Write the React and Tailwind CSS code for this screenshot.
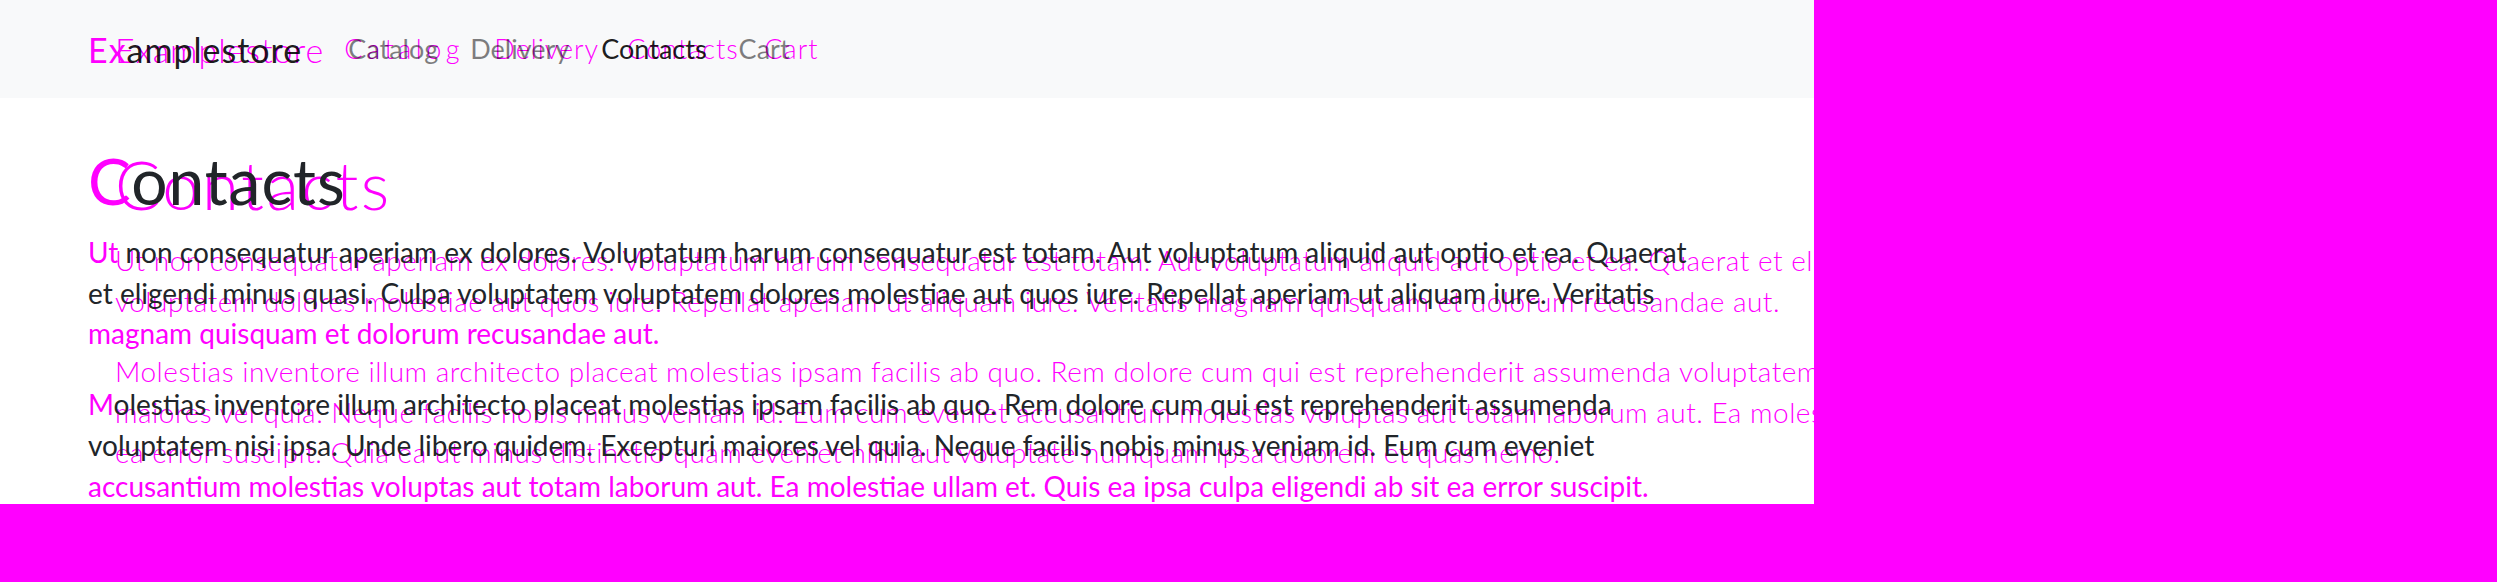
import React from 'react';

const MAG = 'text-[#ff00ff]';

export default function App() {
  return (
    <div className="w-[2497px] h-[582px] bg-[#ff00ff] overflow-hidden" style={{ fontFamily: 'Lato, "Open Sans", sans-serif' }}>
      <div className="relative w-[1814px] h-[504px] bg-white overflow-hidden text-[#212529]">
        {/* navbar */}
        <nav className="h-[98px] bg-[#f8f9fa] flex items-center pl-[88px]">
          <span className="relative z-20 text-[34px] leading-[51px] tracking-[1px] text-black/90">
            <span className={MAG}>Ex</span>amplestore
          </span>
          <div className="flex items-center ml-[46px] gap-[32px] text-[27px] leading-[40px]">
            <span className="relative z-20 text-black/50">Catalog</span>
            <span className="relative z-20 text-black/50">Delivery</span>
            <span className="relative z-20 text-black/90">Contacts</span>
            <span className="relative z-20 text-black/50">Cart</span>
          </div>
        </nav>

        <main className="pl-[88px]">
          <h1 className="relative z-20 text-[64px] leading-[77px] tracking-[1px] mt-[44px] mb-[13px]">
            <span className={MAG}>C</span>ontacts
          </h1>
          <p className="relative z-20 text-[28px] leading-[40.5px] whitespace-nowrap mb-[30px]">
            <span className="block"><span className={MAG}>Ut</span> non consequatur aperiam ex dolores. Voluptatum harum consequatur est totam. Aut voluptatum aliquid aut optio et ea. Quaerat</span>
            <span className="block">et eligendi minus quasi. Culpa voluptatem voluptatem dolores molestiae aut quos iure. Repellat aperiam ut aliquam iure. Veritatis</span>
            <span className={`block ${MAG}`}>magnam quisquam et dolorum recusandae aut.</span>
          </p>
          <p className="relative z-20 text-[28px] leading-[41px] whitespace-nowrap">
            <span className="block"><span className={MAG}>M</span>olestias inventore illum architecto placeat molestias ipsam facilis ab quo. Rem dolore cum qui est reprehenderit assumenda</span>
            <span className="block">voluptatem nisi ipsa. Unde libero quidem. Excepturi maiores vel quia. Neque facilis nobis minus veniam id. Eum cum eveniet</span>
            <span className={`block ${MAG}`}>accusantium molestias voluptas aut totam laborum aut. Ea molestiae ullam et. Quis ea ipsa culpa eligendi ab sit ea error suscipit.</span>
          </p>
        </main>

        {/* ghost layer */}
        <div className={`absolute inset-0 z-10 font-light ${MAG} whitespace-nowrap`}>
          <div className="h-[98px] flex items-center pl-[115px]">
            <span className="text-[34px] leading-[51px] tracking-[1px]">Examplestore</span>
            <div className="flex items-center ml-[20px] gap-[30px] text-[27px] leading-[40px] tracking-[1px]">
              <span className="w-[120px] tracking-[4.5px]">Catalog</span>
              <span className="w-[103px]">Delivery</span>
              <span className="w-[107px]">Contacts</span>
              <span>Cart</span>
            </div>
          </div>
          <div className="pl-[115px]">
            <h1 className="text-[67px] leading-[80px] mt-[46px] mb-[16px] tracking-[2.5px]">Contacts</h1>
            <p className="text-[28px] leading-[41px] tracking-[0.5px] mb-[29px]">
              <span className="block">Ut non consequatur aperiam ex dolores. Voluptatum harum consequatur est totam. Aut voluptatum aliquid aut optio et ea. Quaerat et eligendi minus quasi. Culpa voluptatem</span>
              <span className="block">voluptatem dolores molestiae aut quos iure. Repellat aperiam ut aliquam iure. Veritatis magnam quisquam et dolorum recusandae aut.</span>
            </p>
            <p className="text-[28px] leading-[40.5px] tracking-[0.5px]">
              <span className="block">Molestias inventore illum architecto placeat molestias ipsam facilis ab quo. Rem dolore cum qui est reprehenderit assumenda voluptatem nisi ipsa. Unde libero quidem. Excepturi</span>
              <span className="block">maiores vel quia. Neque facilis nobis minus veniam id. Eum cum eveniet accusantium molestias voluptas aut totam laborum aut. Ea molestiae ullam et. Quis ea ipsa culpa eligendi ab sit</span>
              <span className="block">ea error suscipit. Quia ea ut minus distinctio quam eveniet nihil aut voluptate numquam ipsa dolorem et quas nemo.</span>
            </p>
          </div>
        </div>
      </div>
    </div>
  );
}
